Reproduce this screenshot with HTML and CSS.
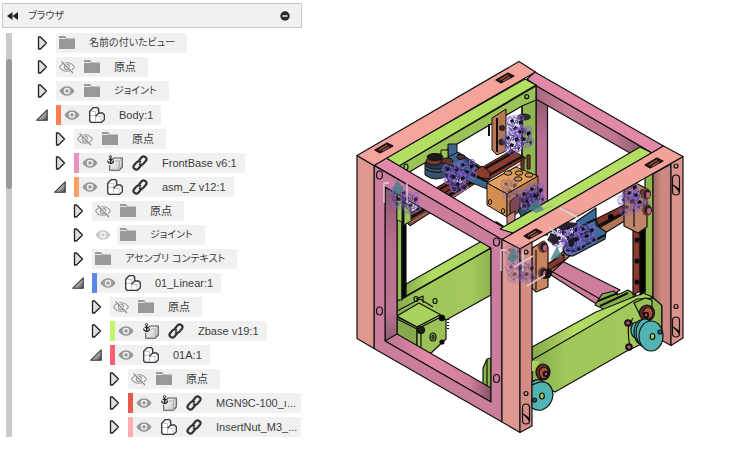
FILE: index.html
```html
<!DOCTYPE html>
<html lang="ja">
<head>
<meta charset="utf-8">
<title>ブラウザ</title>
<link rel="stylesheet" href="styles.css">
</head>
<body>
<svg class="defs" aria-hidden="true">
  <defs>
    <linearGradient id="open-fill" x1="0" y1="0" x2="1" y2="1"><stop offset=".3" stop-color="#eee"/><stop offset="1" stop-color="#444"/></linearGradient>
    <linearGradient id="box-fill" x1="0" y1="0" x2="1" y2="1"><stop offset="0" stop-color="#fff"/><stop offset="1" stop-color="#c4c4c4"/></linearGradient>
    <symbol id="closed" viewBox="0 0 12 14"><path d="M2.500 1H4.500L10.500 7l-6 6H2.500z" fill="#ddd" stroke="#222" stroke-width="1.300" stroke-linejoin="round"/></symbol>
    <symbol id="open" viewBox="0 0 12 14"><path d="M11.200 1.800v10.400H.8z" fill="url(#open-fill)" stroke="#333" stroke-width="1.100" stroke-linejoin="round"/></symbol>
    <symbol id="folder" viewBox="0 0 16 16"><path d="M0 1h6l2 2.500h8V14H0z" fill="#999"/><path d="M0 3.500h7" stroke="#e4e4e4"/></symbol>
    <symbol id="eye" viewBox="0 0 16 16"><path d="M.4 8C3.600 1.700 12.400 1.700 15.600 8 12.400 14.300 3.600 14.300.4 8z" fill="#999"/><circle cx="8" cy="8" r="3.200" fill="#f1f1f1"/><circle cx="8" cy="8" r="1.800" fill="#999"/></symbol>
    <symbol id="hidden" viewBox="0 0 16 16"><path d="M.6 8C4 2.300 12 2.300 15.400 8 12 13.700 4 13.700.6 8z" fill="none" stroke="#999" stroke-width="1.100"/><circle cx="8" cy="8" r="2.600" fill="none" stroke="#999" stroke-width="1.100"/><path d="M3.200 2.200l11 11.600" stroke="#f1f1f1" stroke-width="2"/><path d="M2.500 2.500l11.500 11.500" stroke="#888" stroke-width="1.100"/></symbol>
    <symbol id="part" viewBox="0 0 16 16"><path d="M.7 4.200L4.200.7h4.300l1.200 1.200v4l3.800.1 1.800 1.800v5l-2.700 2.500H2L.7 14z" fill="#fff"/><path d="M1 8.500h5.300M1.500 4.500h5L9 2M6.500 4.500v10M6.500 9.500H12l3-2.500M12 9.500v5" fill="none" stroke="#c6c6d0"/><path d="M.7 4.200L4.200.7h4.300l1.200 1.200v4l3.800.1 1.800 1.800v5l-2.700 2.500H2L.7 14zM6.500 9.200L9.700 6" fill="none" stroke="#34343c" stroke-width="1.300" stroke-linejoin="round"/></symbol>
    <symbol id="anchor" viewBox="0 0 16 16"><path d="M4 6l3-3h8.300v9l-3 3.200H2.700V10" fill="url(#box-fill)" stroke="#555" stroke-width="1.100"/><path d="M12.300 15V6l3-2.700M8 6h4.300" fill="none" stroke="#aaa"/><circle cx="3.500" cy="1.700" r="1.100" fill="#fff" stroke="#222"/><path d="M3.500 2.800V8.500M1.700 4.300h3.600M.5 5.700C.8 7.800 2 8.500 3.500 8.600 5 8.500 6.300 7.800 6.600 5.700" fill="none" stroke="#222" stroke-width="1.200"/></symbol>
    <symbol id="link" viewBox="0 0 16 16"><g fill="none" stroke="#333" stroke-width="2.200" stroke-linecap="round"><path d="M7 5.500l2.700-3.200C11.800-.2 16 3 13.900 5.700L11.500 8.600C10.500 9.800 9 9.900 7.900 9.300"/><path d="M9 10.500l-2.700 3.200C4.200 16.200 0 13 2.100 10.300L4.500 7.400C5.500 6.200 7 6.100 8.100 6.700"/></g></symbol>
  </defs>
</svg>
<main class="app">
  <aside class="browser">
    <header class="bar">
      <button class="icon-button" aria-label="折りたたむ"><svg class="collapse" viewBox="0 0 11 8"><path d="M5.500 0v8L0 4zM11 0v8L5.500 4z" fill="#222"/></svg></button>
      <h1 class="title">ブラウザ</h1>
      <button class="icon-button" aria-label="閉じる"><svg class="minus" viewBox="0 0 10 10"><circle cx="5" cy="5" r="4.700" fill="#2a2a2a"/><path d="M2.500 5h5" stroke="#fff" stroke-width="1.400"/></svg></button>
    </header>
    <div class="body">
      <div class="track"><div class="thumb"></div></div>
      <ul class="tree" id="tree"></ul>
    </div>
  </aside>
  <section class="view">
    <svg class="model" viewBox="350 56 345 382" role="img" aria-label="3D モデル">
      <defs>
        <linearGradient id="rose-post" x1="0" y1="0" x2="0" y2="1"><stop offset="0" stop-color="#8c566d"/><stop offset=".35" stop-color="#b96f90"/><stop offset=".8" stop-color="#bd7394"/><stop offset="1" stop-color="#8e5a70"/></linearGradient>
        <linearGradient id="rose-floor"><stop offset="0" stop-color="#bd7593"/><stop offset=".4" stop-color="#e389a8"/><stop offset=".8" stop-color="#d07f9c"/><stop offset="1" stop-color="#875166"/></linearGradient>
        <linearGradient id="rose-under"><stop offset="0" stop-color="#a5667f"/><stop offset=".3" stop-color="#c98099"/><stop offset=".75" stop-color="#bd7591"/><stop offset="1" stop-color="#8c5a6c"/></linearGradient>
        <linearGradient id="leg-shade"><stop offset="0" stop-color="#9c6a62"/><stop offset=".5" stop-color="#cf8a82"/><stop offset="1" stop-color="#c9857e"/></linearGradient>
        <linearGradient id="lime-face"><stop offset="0" stop-color="#88ab4b"/><stop offset=".25" stop-color="#9fc75a"/><stop offset=".8" stop-color="#a3c85c"/><stop offset="1" stop-color="#8db34e"/></linearGradient>
        <linearGradient id="lime-top"><stop offset="0" stop-color="#86a84a"/><stop offset=".35" stop-color="#b4dd64"/><stop offset="1" stop-color="#a7d15d"/></linearGradient>
        <g id="joint" fill="none" stroke="#8664d2" stroke-width="1">
          <path d="M-8-9l7-2 9 5-2 15-7 3-7-6z" fill="#6c5896" fill-opacity=".22" stroke-opacity=".5"/>
          <circle cx="-6" cy="-5" r="3.500"/><circle cx="5" cy="-8" r="2.500"/><ellipse cx="1" cy="0" rx="5" ry="3.500"/><circle cx="-4" cy="7" r="3"/><circle cx="6" cy="5" r="3.500"/>
          <path d="M-9-2l6 3 3-7 5 4-2 8 5-4M-7 1l5 7 4-3M-3-9l5 2-1 5M-7 3h5l2 6" stroke="#43317a" stroke-opacity=".8"/>
          <path d="M-6-6l3-1 1 3-3 1zM3-5l3-1 1 3-4 2zM-1 0l3 1-1 3-4-1zM5 5l3-1-1 4z" fill="#14101c" stroke="none"/>
        </g>
        <g id="bolt"><ellipse rx="5" ry="6" fill="#754030"/><ellipse cx="1" rx="3.700" ry="4.500" fill="#222"/><ellipse cx="2" cy="1" rx="2" ry="3" fill="#c45c87"/></g>
        <g id="slot"><rect x="-3.500" y="-10" width="7" height="20" rx="3.500" fill="#d28d85"/><path d="M-3 0l6 4v3"/></g>
        <g id="socket"><path d="M-9 2L3-5l6 3L-4 5z" fill="#2b1714"/><path d="M-5 2l8-5M-2 3l7-4" stroke="#a85b48"/></g>
      </defs>
      <g stroke="#111" stroke-width="1.200" stroke-linejoin="round">
        <path d="M536 90h11.500v145H536z" fill="url(#rose-post)"/>
        <path d="M535 85l107 62-12 6-94-54z" fill="url(#rose-under)"/>
        <path d="M527 79l8-7 128.500 74-11.500 7-10-6-107-62z" fill="#e289a9"/>
        <path d="M551 271l11-10 58 29-22 15-47-30z" fill="#cf7d9d"/><path d="M551 271l49 28" fill="none"/>
        <path d="M522 92l14-7v95h-14z" fill="#91b751"/>
        <path d="M399 166l137-80v14l-14 6-111 65-6 7z" fill="#9bc357"/>
        <path d="M386 158l139-79 11 6-137 81z" fill="#b2de62"/>
        <path d="M522 106v57" fill="none"/>
        <circle cx="526.700" cy="96.700" r="2" fill="none"/><ellipse cx="406" cy="167" rx="2" ry="3" fill="none"/>
        <path d="M406 284l76-43 9 7v6l-89 51z" fill="url(#lime-top)"/>
        <path d="M397 301l94-53v47l-45 25-49 14z" fill="url(#lime-face)"/>
        <path d="M406 284l-4 15 89-51" fill="none"/>
        <path d="M397 186h5v114h-5z" fill="#94bc53"/><path d="M402 190h4v106l-4 3z" fill="#050505"/>
        <path d="M416 299l7-3v7M397 311l23-12 13 8" fill="none"/><ellipse cx="416" cy="299" rx="2" ry="2.500" fill="none"/><ellipse cx="435" cy="301" rx="2" ry="2.500" fill="none"/>
        <path d="M397 316l22-13 22 12-24 12z" fill="#a9d35e"/><path d="M397 317l20 10v20l-20-12z" fill="#86aa4b"/>
        <path d="M417 327l23-12 6 5v19l-16 15-13-7z" fill="#9bc158"/><path d="M397 319l20 10 24-12M421 331v19" fill="none"/>
        <ellipse cx="433" cy="337" rx="3" ry="4" fill="#8aac4e"/><ellipse cx="433" cy="337" rx="1" ry="2" fill="none"/>
        <circle cx="421" cy="330" r="3.500" fill="#1b2110"/><circle cx="442" cy="318" r="2.600"/><circle cx="442" cy="342" r="2"/>
        <path d="M448 319v12" stroke-dasharray="1 2" stroke-width="2"/>
        <path d="M483 368l4-9 4-1v31l-8-4z" fill="#8ab24d"/><path d="M487 360v27" fill="none"/>
      </g>
      <g stroke="#15100e" stroke-width="1" stroke-linejoin="round">
        <path d="M407 215l62-36 7 4-66 43-4-4z" fill="#754235"/><path d="M410 218l62-36" stroke-width="3"/><path d="M410 223l59-36" stroke="#c08a68"/>
        <path d="M436 188l12-7 9 4-13 8z" fill="#7d2f26"/><path d="M440 189l13-7" stroke-width="2"/>
        <path d="M467 176l45-26 14 8-44 26z" fill="#8a3b30"/><path d="M472 176l42-24M479 181l44-25" stroke-width="2.500"/><path d="M484 185l42-24" stroke="#c3876a" stroke-width="2"/>
        <path d="M492 118l14-9v42l-9 4-5-5z" fill="#b57855"/><path d="M489 124v12M497 118v34" stroke-width="2"/>
        <path d="M448 144h9v14h-9z" fill="#3f6485"/>
        <path d="M446 158l12-6 31 20-2 17-36-15z" fill="#3c658a"/>
        <path d="M458 154l32 21M450 164l38 18" stroke-width="2"/>
        <path d="M441 150h7v12h-7z" fill="#9bc555"/>
        <path d="M425 163v12q10 8 24 0v-12z" fill="#35536d"/><path d="M425 169q12 7 24 0" fill="none"/><ellipse cx="437" cy="164" rx="12" ry="5" fill="#24394e"/><ellipse cx="434" cy="161" rx="8" ry="4" fill="#72382b"/><ellipse cx="435" cy="157" rx="8" ry="3.500" fill="#1c1918"/><ellipse cx="447" cy="161" rx="6" ry="3" fill="#6a3026"/><ellipse cx="461" cy="157" rx="4" ry="2.500" fill="#4a3035"/>
        <path d="M472 173l10-7 8 6v7l-8-1z" fill="#8c3a30"/>
        <path d="M487 183l29-16 22 9-31 18z" fill="#e2a05b"/><path d="M487 183l20 11v23l-20-12z" fill="#d1904f"/><path d="M507 194l31-18v20l-31 21z" fill="#b67c4a"/>
        <g fill="#cf8f4d"><ellipse cx="508" cy="173" rx="4" ry="2.200"/><ellipse cx="519" cy="173" rx="4" ry="2.200"/><ellipse cx="529" cy="175" rx="4" ry="2.200"/><ellipse cx="518" cy="179" rx="4" ry="2.200"/><ellipse cx="490" cy="202" rx="1.700" ry="2.500"/><ellipse cx="503" cy="211" rx="1.700" ry="2.500"/></g>
        <path d="M521 158h3v12h-3zM527 155h3v14h-3z" fill="#79342b"/>
        <path d="M510 201l10-7v17l-10 8z" fill="#7b4658"/>
        <path d="M507 216l8-5v15l-8 4z" fill="#c9867e"/><path d="M495 222l8 5" stroke-width="3"/>
        <path d="M518 210l20-12v10l-16 10z" fill="#2e5364"/>
      </g>
      <g stroke="none" fill="#1b1820" opacity=".85"><ellipse cx="524" cy="117" rx="7" ry="3.500"/><circle cx="502" cy="128" r="3"/><circle cx="502" cy="142" r="3.500"/><circle cx="455" cy="187" r="4"/><path d="M520 198l11-9 9 5-3 12-13 3zM443 173l10 1 3 6-8 1z"/></g>
      <use href="#joint" x="516" y="126"/><use href="#joint" x="524" y="137"/><use href="#joint" x="512" y="143"/>
      <use href="#joint" x="452" y="174"/><use href="#joint" x="467" y="170"/><use href="#joint" x="458" y="182"/>
      <use href="#joint" x="510" y="189" opacity=".5"/><use href="#joint" x="528" y="199"/><use href="#joint" x="536" y="194"/>
      <g stroke="#111" stroke-width="1.200" stroke-linejoin="round">
        <path d="M386 158l127 75-11 7-128-75z" fill="#e089a9"/>
        <path d="M385 187l12 7v141l-12 7z" fill="url(#rose-post)"/>
        <path d="M385 341l12-7 94 54v14z" fill="url(#rose-floor)"/>
        <path d="M374 165.500L502 239.500V422L374 348.500zM385 187v154l106 61V248z" fill="#ca7d9d" fill-rule="evenodd"/>
        <path d="M357 155.500l17 10v183l-17-10z" fill="#df9890"/>
        <path d="M357 155.500L519 61.500l16.500 10.500L374 165.500z" fill="#f5a49b"/>
        <g fill="none"><ellipse cx="379.500" cy="175" rx="3" ry="4"/><ellipse cx="379.500" cy="311" rx="3" ry="4"/><ellipse cx="496.500" cy="242" rx="3" ry="4"/><ellipse cx="496.500" cy="378.500" rx="3" ry="4"/></g>
        <use href="#socket" x="384" y="148"/><use href="#socket" x="505" y="78"/>
      </g>
      <path d="M397 199l5 2v21l-5-2zM404 203l7 3v15l-7 4z" fill="#9ec45a" stroke="#222"/>
      <use href="#joint" x="399" y="197" opacity=".8"/><use href="#joint" x="411" y="203" opacity=".8"/>
      <g stroke="#111" stroke-width="1.200" stroke-linejoin="round">
        <path d="M595 305l7-11 12-3 3 4 11-5 8 5-26 17z" fill="#86ad4a"/><path d="M598 301l20-8M600 306l28-13" fill="none" stroke-width="2"/>
        <path d="M532 347l64-35 50-20 7 5-121 65z" fill="url(#lime-top)"/>
        <path d="M532 360l105-61 16-1 9 6v30l-37 18-70 40-23-12z" fill="url(#lime-face)"/>
        <path d="M645 172l8-4v129l-8-3z" fill="#8fb84f"/>
        <path d="M633 225h7v66l-7 4z" fill="#8d382f"/><path d="M640 220h5v72l-5 3z"/>
        <g><circle cx="637" cy="240" r="2"/><circle cx="637" cy="261" r="2"/><circle cx="637" cy="282" r="2"/></g>
        <path d="M653 174l18-10v181.500l-9-5v-35l-9-8z" fill="url(#leg-shade)"/>
        <path d="M671 163.500l12-7V338l-12 7.500z" fill="#dc948c"/>
        <path d="M500 229l140-82 12 6-139 80z" fill="#b5df64"/>
        <path d="M596 223l40-21v12l-62 38-23 21-7-5z" fill="#b27555"/><path d="M596 219l38-19v8l-35 20zM546 265l18-11v7l-18 11z" fill="#82362c"/><path d="M598 226l30-15" stroke-width="3"/><circle cx="611" cy="217" r="2.500"/>
        <path d="M532 248l12-7 4 6v40l-12 5-4-4z" fill="#c9855f"/><path d="M536 250v40" fill="none"/>
        <path d="M624 188l10-6 13 7v38l-9 6-14-7z" fill="#c28469"/><path d="M634 193v34" fill="none"/>
        <path d="M563 248l9-10 5-17 19-13v17l10 7-1 7-32 17q-10 0-10-8z" fill="#3c6c99"/><path d="M566 250q12 3 18-4l21-11M577 228l19-9M574 238l18-9" fill="none" stroke-width="2"/>
      </g>
      <use href="#joint" x="630" y="191"/><use href="#joint" x="640" y="200"/><use href="#joint" x="627" y="205" opacity=".6"/>
      <use href="#joint" x="559" y="236"/><use href="#joint" x="572" y="233"/><use href="#joint" x="587" y="234"/><use href="#joint" x="572" y="243"/>
      <g fill="#130f18" opacity=".85"><path d="M547 240l4-7 5 2 3 7-5 3zM558 227l9-5 10 1-3 4-12 4zM568 240l8-3-2 7-5 2z"/><circle cx="643" cy="192" r="3"/></g>
      <use href="#bolt" x="646" y="194"/><use href="#bolt" x="647" y="210"/>
      <g stroke="#111" stroke-width="1.200" stroke-linejoin="round">
        <path d="M502 239.500L663.500 146l19.500 10.500L520 249z" fill="#f4a39b"/>
        <path d="M502 239.500l18 9.500v183.500L502 422z" fill="#df9991"/>
        <path d="M520 249l12-7v184l-12 6.500z" fill="#d38d85"/>
        <use href="#slot" x="526" y="414"/><use href="#slot" x="676" y="327"/><use href="#slot" x="676" y="185"/>
        <g fill="none"><circle cx="526" cy="393.500" r="2"/><circle cx="676" cy="306.500" r="2"/><circle cx="676" cy="166" r="2"/><circle cx="526" cy="252" r="2"/></g>
        <use href="#socket" x="533" y="234"/><use href="#socket" x="654" y="163"/>
      </g>
      <use href="#joint" x="515" y="272" opacity=".5"/><use href="#joint" x="527" y="272" opacity=".6"/><use href="#joint" x="514" y="255" opacity=".4"/>
      <use href="#bolt" x="543" y="247"/><use href="#bolt" x="543" y="273"/>
      <path d="M547 268l6 3-3 7-6 1z" fill="#151210"/>
      <g fill="#4fb4b2" stroke="#111" stroke-width="1.200">
        <path d="M634 303l11-5 7 2v8l-12 7z" fill="#98c354"/><ellipse cx="647" cy="313" rx="7.500" ry="8" fill="#6d2c22"/><ellipse cx="648" cy="313" rx="5" ry="6" fill="#b1533b"/>
        <path d="M629 321q-2 18 2 27M633 318q-4 5 2 7" fill="none"/>
        <ellipse cx="636" cy="330" rx="5" ry="8"/><ellipse cx="641" cy="332" rx="7" ry="12"/><ellipse cx="645" cy="333" rx="9" ry="14"/><ellipse cx="651" cy="336" rx="12" ry="15"/><ellipse cx="652.500" cy="336.500" rx="2.300" ry="3" fill="#a4c95b"/><circle cx="660" cy="332" r="2" fill="#2b6461"/>
        <path d="M532 361h7v10h-7z" fill="#a6cf5c" stroke="none"/><ellipse cx="543" cy="372" rx="7" ry="8" fill="#6d2c22"/><ellipse cx="544" cy="373" rx="5" ry="6" fill="#a94e37"/>
        <path d="M532 382q6-4 10-1 11 3 11 14-1 11-11 15-6 1-10-2z"/><path d="M532 385q8-4 12-3" fill="none"/><ellipse cx="542" cy="396" rx="2.300" ry="3" fill="#a4c95b"/><circle cx="534.500" cy="400" r="2" fill="#2b6461"/>
      </g>
      <g fill="#b35079" stroke="#1a1013" stroke-width="2"><circle cx="628" cy="323" r="2.800"/><circle cx="629" cy="347" r="2.800"/><circle cx="646" cy="315" r="2.300"/><circle cx="546" cy="374" r="2.300"/></g>
      <path d="M391 193l6-13 7 9-5 5zM507 260l6-13 6 10-6 5zM528 208l9-9 7 11-8 3zM550 260l7-14 5 11z" fill="#477f88" opacity=".8"/>
      <path d="M384 203v-20M407 183v20M501 271v-21M523 250v21M514 267l19-11M527 286l18-11M560 208l18 10M549 228l18 11" fill="none" stroke="#ddd6d9" stroke-width="1.500" opacity=".85"/>
      <path d="M384 183h5M501 250h5" stroke="#ddd6d9" stroke-width="1.500"/>
      <path d="M530 213l22-7M561 207l20 8" stroke="#998b9c" opacity=".6"/>
    </svg>
  </section>
</main>
<script src="tree.js"></script>
</body>
</html>
```
FILE: styles.css
```css
* { box-sizing: border-box; }
body {
  margin: 0;
  background: #fff;
  color: #3c3c3c;
  font: 11px/20px "Liberation Sans", "Noto Sans CJK JP", sans-serif;
}
button {
  display: flex;
  align-items: center;
  justify-content: center;
  flex: none;
  padding: 0;
  border: 0;
  background: none;
}
svg { display: block; flex: none; }
.defs { position: absolute; width: 0; height: 0; }
.app { display: flex; align-items: flex-start; }
.browser { flex: 0 0 302px; min-width: 0; padding: 3px 0 0 2px; }
.bar {
  display: flex;
  align-items: center;
  height: 25px;
  padding: 0 11px 0 4px;
  border: 1px solid #c8c8c8;
  background: #f1f1f1;
}
.title {
  flex: 1;
  margin: 0 0 0 10px;
  font-size: 10px;
  font-weight: 400;
  font-feature-settings: "palt";
}
.collapse { width: 11px; height: 8px; }
.minus { width: 10px; height: 10px; }
.body { display: flex; padding: 5px 1px 0 4px; }
.track { flex: none; width: 6px; padding-top: 26px; background: #c8cacc; }
.thumb { height: 130px; border-radius: 3px; background: #999a9c; }
.tree {
  display: flex;
  flex: 1;
  flex-direction: column;
  gap: 4px;
  min-width: 0;
  margin: 0;
  padding: 0 0 0 24px;
  list-style: none;
}
.row { display: flex; align-items: center; height: 20px; white-space: nowrap; }
.indent { flex: none; width: 18px; }
.toggle { width: 12px; height: 20px; margin-right: 8px; }
.arrow { width: 12px; height: 14px; }
.label {
  display: flex;
  align-items: center;
  gap: 9px;
  height: 20px;
  padding: 0 8px 0 3px;
  background: #f1f1f1;
}
.long { flex: 1; min-width: 0; padding-right: 0; }
.swatch { align-self: stretch; width: 5px; margin: 0 -6px 0 -3px; }
.icon { width: 16px; height: 16px; }
.faded { margin: 0 6px 0 3px; opacity: .5; }
.name { margin-left: 5px; }
.ja { padding-right: 4px; }
.kana { padding-right: 4px; font-size: 10px; font-feature-settings: "palt"; }
.view { flex: 1; min-width: 0; padding: 56px 0 0 48px; }
.model { width: 100%; max-width: 345px; height: auto; }
```
FILE: tree.js
```js
const rows = [
  { depth: 0, icons: ["folder"], name: "名前の付いたビュー" },
  { depth: 0, icons: ["hidden", "folder"], name: "原点" },
  { depth: 0, icons: ["eye", "folder"], name: "ジョイント" },
  { depth: 0, open: true, color: "#ff7f50", icons: ["eye", "part"], name: "Body:1" },
  { depth: 1, icons: ["hidden", "folder"], name: "原点" },
  { depth: 1, color: "#e991bf", icons: ["eye", "anchor", "link"], name: "FrontBase v6:1" },
  { depth: 1, open: true, color: "#ffa066", icons: ["eye", "part", "link"], name: "asm_Z v12:1" },
  { depth: 2, icons: ["hidden", "folder"], name: "原点" },
  { depth: 2, faded: true, icons: ["folder"], name: "ジョイント" },
  { depth: 2, icons: ["folder"], name: "アセンブリ コンテキスト" },
  { depth: 2, open: true, color: "#5b86ee", icons: ["eye", "part"], name: "01_Linear:1" },
  { depth: 3, icons: ["hidden", "folder"], name: "原点" },
  { depth: 3, color: "#c3f56c", icons: ["eye", "anchor", "link"], name: "Zbase v19:1" },
  { depth: 3, open: true, color: "#ff6073", icons: ["eye", "part"], name: "01A:1" },
  { depth: 4, icons: ["hidden", "folder"], name: "原点" },
  { depth: 4, long: true, color: "#e65a4c", icons: ["eye", "anchor", "link"], name: "MGN9C-100_ı..." },
  { depth: 4, long: true, color: "#ffadb2", icons: ["eye", "part", "link"], name: "InsertNut_M3_..." }
];

const glyph = (id, cls) => `<svg class="${cls}" aria-hidden="true"><use href="#${id}"/></svg>`;
const icon = id => id === "eye" || id === "hidden"
  ? `<button aria-label="表示切替">${glyph(id, "icon")}</button>`
  : glyph(id, "icon");
const script = text => /[ぁ-ヿ]/.test(text) ? " kana" : /[一-龠]/.test(text) ? " ja" : "";

document.getElementById("tree").innerHTML = rows.map(r => `
  <li class="row">
    ${'<span class="indent"></span>'.repeat(r.depth)}
    <button class="toggle" aria-label="展開" aria-expanded="${!!r.open}">${glyph(r.open ? "open" : "closed", "arrow")}</button>
    ${r.faded ? `<button class="faded" aria-label="表示切替">${glyph("eye", "icon")}</button>` : ""}
    <div class="label${r.long ? " long" : ""}">
      ${r.color ? `<span class="swatch" style="background:${r.color}"></span>` : ""}
      ${r.icons.map(icon).join("")}
      <span class="name${script(r.name)}">${r.name}</span>
    </div>
  </li>`).join("");
```
